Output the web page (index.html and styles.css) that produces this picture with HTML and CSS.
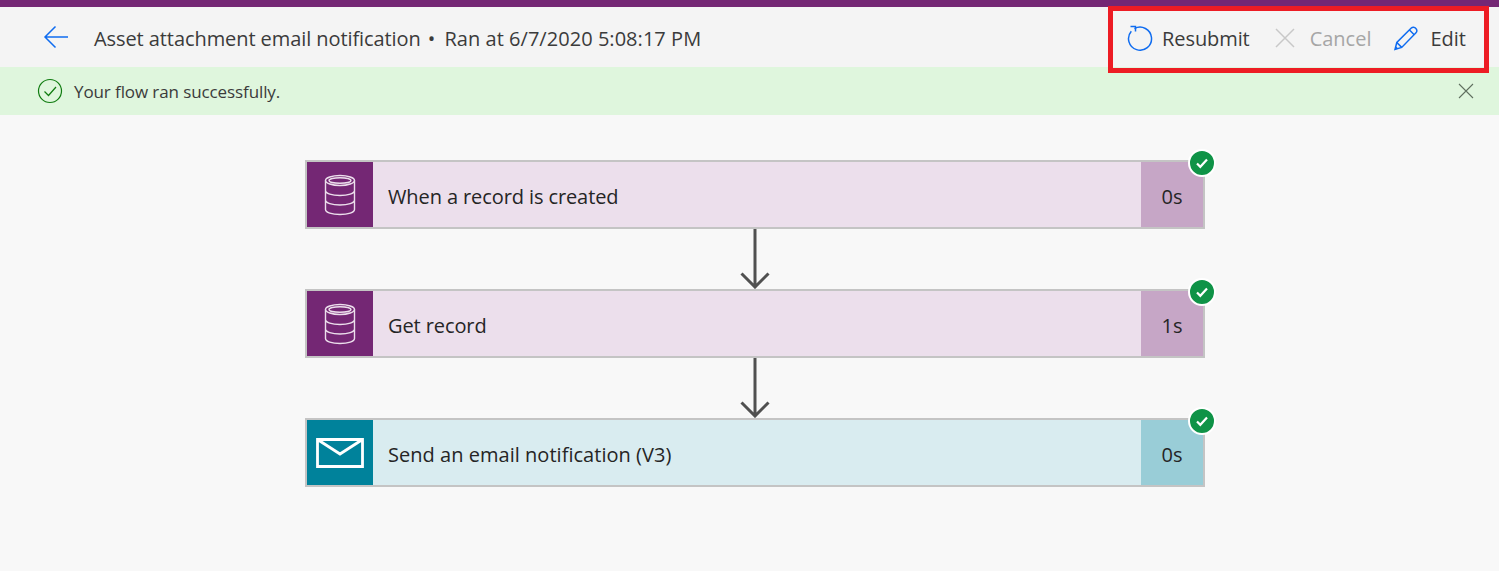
FILE: index.html
```html
<!DOCTYPE html>
<html lang="en">
<head>
  <meta charset="UTF-8">
  <title>Flow run</title>
  <link rel="stylesheet" href="styles.css">
</head>
<body>
  <div class="top-strip"></div>

  <!-- Command bar -->
  <header class="command-bar">
    <svg class="back-icon" width="26" height="24" viewBox="0 0 26 24"><path d="M25 12H2M12.500 1.500 2 12l10.500 10.500" fill="none" stroke="#0f6cf0" stroke-width="1.500"/></svg>
    <div class="run-title">Asset attachment email notification <span class="dot">•</span> <span class="run-time">Ran at 6/7/2020 5:08:17 PM</span></div>
    <div class="actions">
      <button class="action resubmit">
        <svg width="26" height="26" viewBox="0 0 26 26"><path d="M7.500 3.600A11.500 11.500 0 1 1 4.300 6.200" fill="none" stroke="#0f6cf0" stroke-width="1.500"/><path d="M3.500 1.500h5v5" fill="none" stroke="#0f6cf0" stroke-width="1.500"/></svg>
        <span>Resubmit</span>
      </button>
      <button class="action disabled">
        <svg width="22" height="22" viewBox="0 0 22 22"><path d="M2 2l18 18M20 2 2 20" fill="none" stroke="#c8c8c8" stroke-width="1.500"/></svg>
        <span>Cancel</span>
      </button>
      <button class="action">
        <svg width="26" height="26" viewBox="0 0 26 26"><path d="M2 24.500l1.800-7L18.300 3a2.900 2.900 0 0 1 4.400 0.300 2.900 2.900 0 0 1 0.300 4.400L8.700 22.400zM3.800 17.500l4.900 4.900M16.500 5l4.700 4.700" fill="none" stroke="#0f6cf0" stroke-width="1.500"/><path d="M2 24.500l0.800-3.300 2.500 2.400z" fill="#0f6cf0"/></svg>
        <span>Edit</span>
      </button>
    </div>
    <div class="highlight"></div>
  </header>

  <!-- Status banner -->
  <div class="banner">
    <svg width="26" height="26" viewBox="0 0 26 26"><circle cx="13" cy="13" r="11.500" fill="none" stroke="#107c10" stroke-width="1.200"/><path d="M7.500 13.500l4 4 7.500-8.500" fill="none" stroke="#107c10" stroke-width="1.200"/></svg>
    <span class="banner-text">Your flow ran successfully.</span>
    <svg class="banner-close" width="16" height="16" viewBox="0 0 16 16"><path d="M1 1l14 14M15 1 1 15" fill="none" stroke="#5f6f5f" stroke-width="1.100"/></svg>
  </div>

  <!-- Flow steps -->
  <main class="flow">
    <div class="step purple">
      <div class="step-icon">
        <svg width="34" height="42" viewBox="0 0 34 42"><g fill="none" stroke="#ecdfec" stroke-width="1.400"><ellipse cx="17" cy="6.500" rx="14.500" ry="5"/><ellipse cx="17" cy="6.500" rx="11" ry="2.800"/><path d="M2.500 6.500v29c0 3 6.500 5 14.500 5s14.500-2 14.500-5v-29M2.500 16.500c0 3 6.500 5 14.500 5s14.500-2 14.500-5M2.500 26c0 3 6.500 5 14.500 5s14.500-2 14.500-5"/></g></svg>
      </div>
      <div class="step-name">When a record is created</div>
      <div class="step-time">0s</div>
      <span class="ok"><svg width="14" height="12" viewBox="0 0 14 12"><path d="M2 6.500l3.300 3.300L12 2.500" fill="none" stroke="#fff" stroke-width="2.200"/></svg></span>
    </div>
    <svg class="arrow" width="30" height="60" viewBox="0 0 30 60"><path d="M15 0v58M1.500 44.500 15 58l13.500-13.500" fill="none" stroke="#505050" stroke-width="3"/></svg>
    <div class="step purple">
      <div class="step-icon">
        <svg width="34" height="42" viewBox="0 0 34 42"><g fill="none" stroke="#ecdfec" stroke-width="1.400"><ellipse cx="17" cy="6.500" rx="14.500" ry="5"/><ellipse cx="17" cy="6.500" rx="11" ry="2.800"/><path d="M2.500 6.500v29c0 3 6.500 5 14.500 5s14.500-2 14.500-5v-29M2.500 16.500c0 3 6.500 5 14.500 5s14.500-2 14.500-5M2.500 26c0 3 6.500 5 14.500 5s14.500-2 14.500-5"/></g></svg>
      </div>
      <div class="step-name">Get record</div>
      <div class="step-time">1s</div>
      <span class="ok"><svg width="14" height="12" viewBox="0 0 14 12"><path d="M2 6.500l3.300 3.300L12 2.500" fill="none" stroke="#fff" stroke-width="2.200"/></svg></span>
    </div>
    <svg class="arrow" width="30" height="60" viewBox="0 0 30 60"><path d="M15 0v58M1.500 44.500 15 58l13.500-13.500" fill="none" stroke="#505050" stroke-width="3"/></svg>
    <div class="step teal">
      <div class="step-icon">
        <svg width="48" height="30" viewBox="0 0 48 30"><path d="M1.500 1.500h45v27h-45zM1.500 1.500 24 16 46.500 1.500" fill="none" stroke="#fff" stroke-width="2.800"/></svg>
      </div>
      <div class="step-name wide">Send an email notification (V3)</div>
      <div class="step-time">0s</div>
      <span class="ok"><svg width="14" height="12" viewBox="0 0 14 12"><path d="M2 6.500l3.300 3.300L12 2.500" fill="none" stroke="#fff" stroke-width="2.200"/></svg></span>
    </div>
  </main>
</body>
</html>
```

FILE: styles.css
```css
/* Base */
* { margin: 0; padding: 0; box-sizing: border-box; }
html, body { width: 100%; height: 100%; overflow: hidden; }
body { background: #f8f8f8; font-family: "Open Sans", "Noto Sans", Arial, sans-serif; color: #333; }

.top-strip { height: 7px; background: #742774; }

/* Command bar */
.command-bar { position: relative; height: 60px; background: #f4f4f4; display: flex; align-items: center; padding: 0 33px 0 43px; }
.back-icon { margin-right: 25px; }
.run-title { font-size: 20px; letter-spacing: -0.08px; color: #3b3b3b; white-space: nowrap; padding-top: 2px; }
.dot { margin: 0 4px 0 2px; }
.run-time { letter-spacing: 0.04px; }
.actions { margin-left: auto; display: flex; align-items: center; gap: 22px; padding-top: 3px; }
.action { display: flex; align-items: center; gap: 11px; border: none; background: none; font: inherit; font-size: 20px; color: #3b3b3b; }
.action svg { margin-top: -2px; }
.action.resubmit { gap: 9px; letter-spacing: -0.1px; }
.action.disabled { color: #a6a6a6; gap: 14px; margin-left: 2px; }
.highlight { position: absolute; left: 1108px; top: -1px; width: 381px; height: 67px; border: 5px solid #ed1c24; }

/* Banner */
.banner { height: 48px; background: #dff6dd; display: flex; align-items: center; padding: 0 25px 0 37px; }
.banner-text { margin-left: 11px; font-size: 17px; letter-spacing: -0.1px; color: #3b3b3b; }
.banner-close { margin-left: auto; }

/* Flow */
.flow { display: flex; flex-direction: column; align-items: center; padding: 45px 0 0 11px; }
.step { position: relative; width: 900px; height: 69px; border: 2px solid #c4c4c4; display: flex; align-items: stretch; font-size: 20px; letter-spacing: -0.1px; color: #252525; }
.step-icon { width: 66px; display: flex; align-items: center; justify-content: center; }
.step-name { flex: 1; display: flex; align-items: center; padding: 4px 0 0 15px; }
.step-name.wide { letter-spacing: 0.03px; }
.step-time { width: 62px; display: flex; align-items: center; justify-content: center; padding-top: 4px; }
.purple { background: #ecdfec; }
.purple .step-icon { background: #742774; }
.purple .step-time { background: #c6a6c6; }
.teal { background: #d9ecf0; }
.teal .step-icon { background: #00829b; }
.teal .step-time { background: #99cdd7; }
.ok { position: absolute; top: -13px; right: -13px; width: 28px; height: 28px; border-radius: 50%; background: #0f9347; border: 2px solid #fff; display: flex; align-items: center; justify-content: center; }
.arrow { display: block; }
```
